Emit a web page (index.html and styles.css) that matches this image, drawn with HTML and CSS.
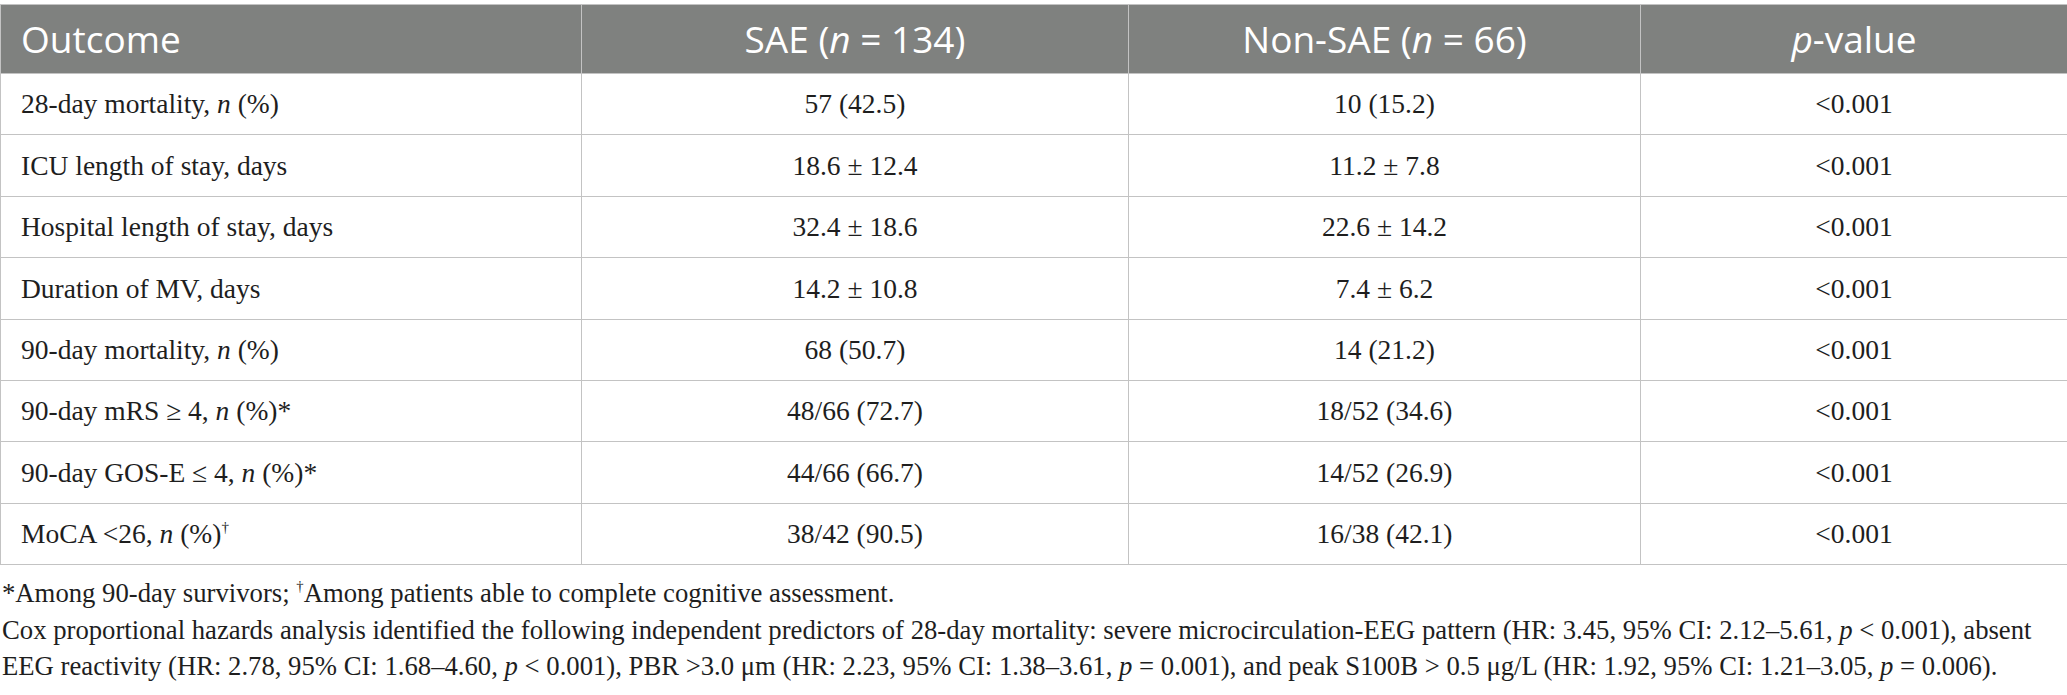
FILE: index.html
```html
<!DOCTYPE html>
<html lang="en">
<head>
<meta charset="utf-8">
<title>Outcomes table</title>
<link rel="stylesheet" href="styles.css">
</head>
<body>
<div class="page">
  <table class="outcomes">
    <colgroup>
      <col class="c1"><col class="c2"><col class="c3"><col class="c4">
    </colgroup>
    <thead>
      <tr>
        <th class="left">Outcome</th>
        <th>SAE (<i>n</i> = 134)</th>
        <th>Non-SAE (<i>n</i> = 66)</th>
        <th><i>p</i>-value</th>
      </tr>
    </thead>
    <tbody>
      <tr><td class="left">28-day mortality, <i>n</i> (%)</td><td>57 (42.5)</td><td>10 (15.2)</td><td>&lt;0.001</td></tr>
      <tr><td class="left">ICU length of stay, days</td><td>18.6 ± 12.4</td><td>11.2 ± 7.8</td><td>&lt;0.001</td></tr>
      <tr><td class="left">Hospital length of stay, days</td><td>32.4 ± 18.6</td><td>22.6 ± 14.2</td><td>&lt;0.001</td></tr>
      <tr><td class="left">Duration of MV, days</td><td>14.2 ± 10.8</td><td>7.4 ± 6.2</td><td>&lt;0.001</td></tr>
      <tr><td class="left">90-day mortality, <i>n</i> (%)</td><td>68 (50.7)</td><td>14 (21.2)</td><td>&lt;0.001</td></tr>
      <tr><td class="left">90-day mRS ≥ 4, <i>n</i> (%)*</td><td>48/66 (72.7)</td><td>18/52 (34.6)</td><td>&lt;0.001</td></tr>
      <tr><td class="left">90-day GOS-E ≤ 4, <i>n</i> (%)*</td><td>44/66 (66.7)</td><td>14/52 (26.9)</td><td>&lt;0.001</td></tr>
      <tr><td class="left">MoCA &lt;26, <i>n</i> (%)<sup>†</sup></td><td>38/42 (90.5)</td><td>16/38 (42.1)</td><td>&lt;0.001</td></tr>
    </tbody>
  </table>
  <div class="notes">
    <p>*Among 90-day survivors; <sup>†</sup>Among patients able to complete cognitive assessment.</p>
    <p>Cox proportional hazards analysis identified the following independent predictors of 28-day mortality: severe microcirculation-EEG pattern (HR: 3.45, 95% CI: 2.12–5.61, <i>p</i> &lt; 0.001), absent EEG reactivity (HR: 2.78, 95% CI: 1.68–4.60, <i>p</i> &lt; 0.001), PBR &gt;3.0 μm (HR: 2.23, 95% CI: 1.38–3.61, <i>p</i> = 0.001), and peak S100B &gt; 0.5 μg/L (HR: 1.92, 95% CI: 1.21–3.05, <i>p</i> = 0.006).</p>
  </div>
</div>
</body>
</html>
```
FILE: styles.css
```css
html, body {
  margin: 0;
  padding: 0;
  background: #ffffff;
}

.page {
  padding-top: 4px;
  width: 2067px;
}

.outcomes {
  width: 2067px;
  border-collapse: collapse;
  table-layout: fixed;
  font-family: "Liberation Serif", "Times New Roman", serif;
  color: #1e1e1e;
}

.c1 { width: 581px; }
.c2 { width: 547px; }
.c3 { width: 512px; }
.c4 { width: 427px; }

.outcomes th {
  background: #7f817f;
  color: #ffffff;
  font-family: "Open Sans", "Noto Sans", sans-serif;
  font-weight: 400;
  font-size: 37px;
  line-height: 1.2;
  height: 68px;
  padding: 0 20px;
  text-align: center;
  vertical-align: middle;
  border: 1px solid #c3c3c3;
  white-space: nowrap;
}

.outcomes td {
  font-size: 27.5px;
  line-height: 1.15;
  height: 60.4px;
  padding: 0 20px;
  text-align: center;
  vertical-align: middle;
  border: 1px solid #c3c3c3;
  white-space: nowrap;
}

.outcomes th.left,
.outcomes td.left {
  text-align: left;
}

.outcomes sup,
.notes sup {
  font-size: 0.55em;
  vertical-align: 0.75em;
  line-height: 0;
}

.notes {
  margin-top: 10px;
  width: 2040px;
  font-family: "Liberation Serif", "Times New Roman", serif;
  font-size: 26.7px;
  line-height: 36.5px;
  color: #1e1e1e;
}

.notes p {
  margin: 0;
  padding-left: 2px;
}
```
